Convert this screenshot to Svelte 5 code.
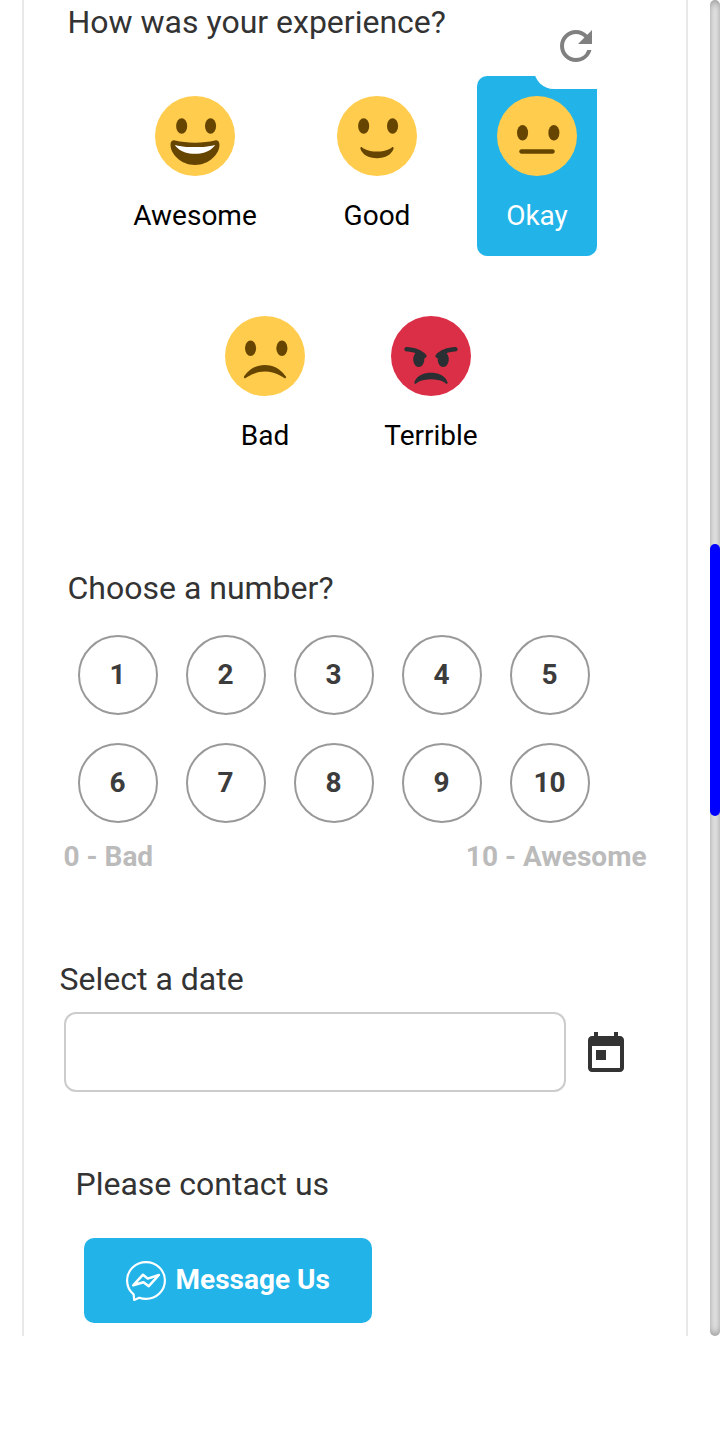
<script>
  const rows = [
    [
      { name: 'Awesome', face: 'grin', width: 164 },
      { name: 'Good', face: 'smile', width: 120 },
      { name: 'Okay', face: 'neutral', width: 120 },
    ],
    [
      { name: 'Bad', face: 'frown', width: 120 },
      { name: 'Terrible', face: 'angry', width: 132 },
    ],
  ];
  const eyes = {
    grin: [12, 25, 13.5],
    smile: [12, 25, 13.5],
    neutral: [11.5, 25.6, 16.5],
    frown: [11.5, 25.6, 14.5],
  };
  const numbers = [1, 2, 3, 4, 5, 6, 7, 8, 9, 10];
  let selected = $state('Okay');
</script>

{#snippet emoji(face)}
  <svg class="emoji" viewBox="0 0 36 36">
    <circle cx="18" cy="18" r="18" fill={face === 'angry' ? '#DA2F47' : '#FFCC4D'} />
    {#if eyes[face]}
      <ellipse cx={eyes[face][0]} cy={eyes[face][2]} rx="2.5" ry="3.5" fill="#664500" />
      <ellipse cx={eyes[face][1]} cy={eyes[face][2]} rx="2.5" ry="3.5" fill="#664500" />
    {/if}
    {#if face === 'grin'}
      <path fill="#664500" d="M18 21c-3.623 0-6.027-.422-9-1-.679-.131-2 0-2 2 0 4 4.595 9 11 9 6.404 0 11-5 11-9 0-2-1.321-2.132-2-2-2.973.578-5.377 1-9 1z" />
      <path fill="#FFF" d="M9 22s3 1 9 1 9-1 9-1-2 4-9 4-9-4-9-4z" />
    {:else if face === 'smile'}
      <path fill="#664500" d="M10.515 23.621C10.56 23.8 11.683 28 18 28c6.318 0 7.44-4.2 7.485-4.379.055-.217-.043-.442-.237-.554-.195-.111-.439-.078-.6.077C24.629 23.163 22.694 25 18 25s-6.63-1.837-6.648-1.855C11.256 23.05 11.128 23 11 23c-.084 0-.169.021-.246.064-.196.112-.294.339-.239.557z" />
    {:else if face === 'neutral'}
      <path fill="#664500" d="M25 26H11c-.552 0-1-.447-1-1s.448-1 1-1h14c.553 0 1 .447 1 1s-.447 1-1 1z" />
    {:else if face === 'frown'}
      <path fill="#664500" d="M8.665 27.871c.178.161.444.171.635.029.039-.029 3.922-2.9 8.7-2.9 4.766 0 8.662 2.871 8.7 2.9.191.142.457.13.635-.029.177-.16.217-.424.094-.628C27.3 27.029 24.212 22 18 22s-9.301 5.028-9.429 5.243c-.123.205-.084.468.094.628z" />
    {:else}
      <path fill="#292F33" d="M25.485 29.879C25.44 29.7 24.317 25.5 18 25.5c-6.318 0-7.44 4.2-7.485 4.379-.055.217.043.442.237.554.195.109.439.079.6-.077.019-.019 1.954-1.856 6.648-1.856s6.63 1.837 6.648 1.855c.096.095.224.145.352.145.084 0 .169-.021.246-.064.196-.112.294-.339.239-.557zm-9.778-12.586C12.452 14.038 7.221 14 7 14c-.552 0-.999.447-.999.998-.001.552.446 1 .998 1.002.029 0 1.925.022 3.983.737-.593.64-.982 1.634-.982 2.763 0 1.934 1.119 3.5 2.5 3.5s2.5-1.566 2.5-3.5c0-.174-.019-.34-.037-.507.013 0 .025.007.037.007.256 0 .512-.098.707-.293.391-.391.391-1.023 0-1.414zM29 14c-.221 0-5.451.038-8.707 3.293-.391.391-.391 1.023 0 1.414.195.195.451.293.707.293.013 0 .024-.007.036-.007-.016.167-.036.333-.036.507 0 1.934 1.119 3.5 2.5 3.5s2.5-1.566 2.5-3.5c0-1.129-.389-2.123-.982-2.763 2.058-.715 3.954-.737 3.984-.737.551-.002.998-.45.997-1.002-.001-.551-.447-.998-.999-.998z" />
    {/if}
  </svg>
{/snippet}

<div class="page">
  <main class="panel">
    <section class="experience">
      <h2>How was your experience?</h2>
      <button class="reset" aria-label="Reset" onclick={() => (selected = '')}>
        <svg viewBox="0 0 24 24" fill="#808080"><path d="M17.65 6.35A7.958 7.958 0 0012 4c-4.42 0-7.99 3.58-7.99 8s3.57 8 7.99 8c3.73 0 6.84-2.55 7.73-6h-2.08A5.99 5.99 0 0112 18c-3.31 0-6-2.69-6-6s2.69-6 6-6c1.66 0 3.14.69 4.22 1.78L13 11h7V4l-2.35 2.35z" /></svg>
      </button>
      {#each rows as row}
        <div class="faces">
          {#each row as item}
            <button
              class="face"
              class:selected={selected === item.name}
              style="width: {item.width}px"
              onclick={() => (selected = item.name)}
            >
              {@render emoji(item.face)}
              <span>{item.name}</span>
            </button>
          {/each}
        </div>
      {/each}
    </section>

    <section class="rating">
      <h2>Choose a number?</h2>
      <div class="numbers">
        {#each numbers as n}
          <button class="number">{n}</button>
        {/each}
      </div>
      <div class="scale"><span>0 - Bad</span><span>10 - Awesome</span></div>
    </section>

    <section class="date">
      <h2>Select a date</h2>
      <div class="date-row">
        <input type="text" aria-label="Date" />
        <svg viewBox="0 0 24 24" fill="#333"><path d="M19 3h-1V1h-2v2H8V1H6v2H5c-1.11 0-1.99.9-1.99 2L3 19c0 1.1.89 2 2 2h14c1.1 0 2-.9 2-2V5c0-1.1-.9-2-2-2zm0 16H5V8h14v11zM7 10h5v5H7z" /></svg>
      </div>
    </section>

    <section class="contact">
      <h2>Please contact us</h2>
      <button class="message">
        <svg viewBox="0 0 40 40" fill="none" stroke="#fff" stroke-width="2.2" stroke-linejoin="round">
          <path d="M7.600 33.300C3.600 30 1.100 25 1.100 19.500 1.100 9.200 9.500 1.100 20 1.100s18.900 8.100 18.900 18.400S30.500 37.900 20 37.900c-2.400 0-4.600-.4-6.700-1.200L8.200 38.900z" />
          <path stroke-width="2.500" d="M7.200 24.300 17 13.700 21.700 17.600 32.900 14 22.800 25.200 17.500 21.200z" />
        </svg>
        <span>Message Us</span>
      </button>
    </section>
  </main>

  <div class="scrollbar"><div class="thumb"></div></div>
</div>

<style>
  :global(body) {
    background: #fff;
  }
  .page {
    display: flex;
    justify-content: space-between;
    width: 720px;
    height: 1336px;
    padding-left: 22px;
    box-sizing: border-box;
    font-family: Roboto, sans-serif;
    color: #333;
    background: #fff;
  }
  .panel {
    width: 666px;
    box-sizing: border-box;
    border: solid #e8e8e8;
    border-width: 0 2px;
    overflow: hidden;
  }
  h2 {
    margin: 0 0 0 -0.5px;
    font-size: 32px;
    line-height: 40px;
    font-weight: 400;
  }
  button {
    border: 0;
    padding: 0;
    margin: 0;
    background: none;
    font: inherit;
    color: inherit;
  }
  svg {
    display: block;
    flex: none;
  }
  .experience {
    position: relative;
    height: 568px;
    padding: 2px 0 0 44px;
    box-sizing: border-box;
  }
  .reset {
    position: absolute;
    z-index: 1;
    left: 510px;
    top: 3px;
    width: 84px;
    height: 86px;
    padding: 19px 18px;
    border-radius: 20px;
    background: #fff;
    box-sizing: border-box;
  }
  .reset svg {
    width: 48px;
    height: 48px;
  }
  .faces {
    display: flex;
    gap: 40px;
    margin: 34px 0 0 45px;
  }
  .faces + .faces {
    margin: 40px 0 0 137px;
  }
  .face {
    height: 180px;
    display: flex;
    flex-direction: column;
    align-items: center;
    padding: 20px 0;
    box-sizing: border-box;
    border-radius: 10px;
    color: #000;
    font-size: 28px;
    line-height: 40px;
  }
  .face span {
    margin-top: 20px;
  }
  .face.selected {
    background: #22b3e9;
    color: #fff;
  }
  .emoji {
    width: 80px;
    height: 80px;
  }
  .rating {
    height: 391px;
    padding: 0 0 0 40px;
    box-sizing: border-box;
  }
  .rating h2 {
    padding-left: 4px;
  }
  .numbers {
    display: grid;
    grid-template-columns: repeat(5, 80px);
    gap: 28px;
    padding: 27px 0 0 14px;
  }
  .number {
    height: 80px;
    padding-right: 1px;
    border: 2px solid #999;
    border-radius: 50%;
    font-size: 28px;
    font-weight: 700;
    line-height: 76px;
    color: #3c3c3c;
  }
  .scale {
    display: flex;
    justify-content: space-between;
    width: 583px;
    margin: 14px 0 0 -0.5px;
    font-size: 28px;
    line-height: 40px;
    font-weight: 700;
    color: #bbb;
  }
  .date {
    height: 205px;
    padding-left: 36px;
  }
  .date-row {
    display: flex;
    gap: 16px;
    padding: 13px 0 0 4px;
  }
  .date-row svg {
    width: 48px;
    height: 48px;
    margin-top: 18px;
  }
  input {
    width: 502px;
    height: 80px;
    box-sizing: border-box;
    border: 2px solid #ccc;
    border-radius: 12px;
    background: #fff;
    font: inherit;
  }
  .contact {
    padding-left: 52px;
  }
  .message {
    display: flex;
    align-items: center;
    gap: 9.5px;
    width: 288px;
    height: 85px;
    margin: 34px 0 0 8px;
    padding-left: 42px;
    box-sizing: border-box;
    border-radius: 10px;
    background: #22b3e9;
    color: #fff;
    font-size: 28px;
    line-height: 40px;
    font-weight: 700;
  }
  .message span {
    padding-bottom: 1px;
  }
  .message svg {
    width: 40px;
    height: 40px;
  }
  .scrollbar {
    width: 10px;
    height: 1336px;
    padding-top: 544px;
    box-sizing: border-box;
    border-radius: 10px;
    background: #fff;
    box-shadow: inset 0 0 10px #808080;
    overflow: hidden;
  }
  .thumb {
    height: 272px;
    border-radius: 10px;
    background: #00f;
  }
</style>
